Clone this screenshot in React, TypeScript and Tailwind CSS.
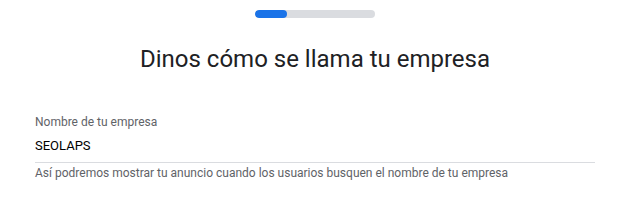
export default function App() {
  return (
    <div className="w-[636px] h-[218px] bg-white" style={{ fontFamily: "Roboto, Arial, sans-serif" }}>
      <div className="w-[560px] ml-[35px] flex flex-col items-center">
        <div className="mt-[10px] w-[120px] h-[8px] rounded-full bg-[#dadce0] overflow-hidden">
          <div className="w-[32px] h-full rounded-full bg-[#1a73e8]" />
        </div>
        <h1 className="mt-[26px] text-[24px] leading-[30px] text-[#202124]">
          Dinos cómo se llama tu empresa
        </h1>
        <div className="mt-[40px] w-full">
          <div className="text-[12px] leading-[16px] text-[#5f6368]">Nombre de tu empresa</div>
          <div className="mt-[8px] pb-[8px] border-b border-[#dadce0] text-[13px] leading-[16px] text-black">
            SEOLAPS
          </div>
          <div className="mt-[2px] text-[12px] leading-[16px] text-[#5f6368]">
            Así podremos mostrar tu anuncio cuando los usuarios busquen el nombre de tu empresa
          </div>
        </div>
      </div>
    </div>
  );
}
